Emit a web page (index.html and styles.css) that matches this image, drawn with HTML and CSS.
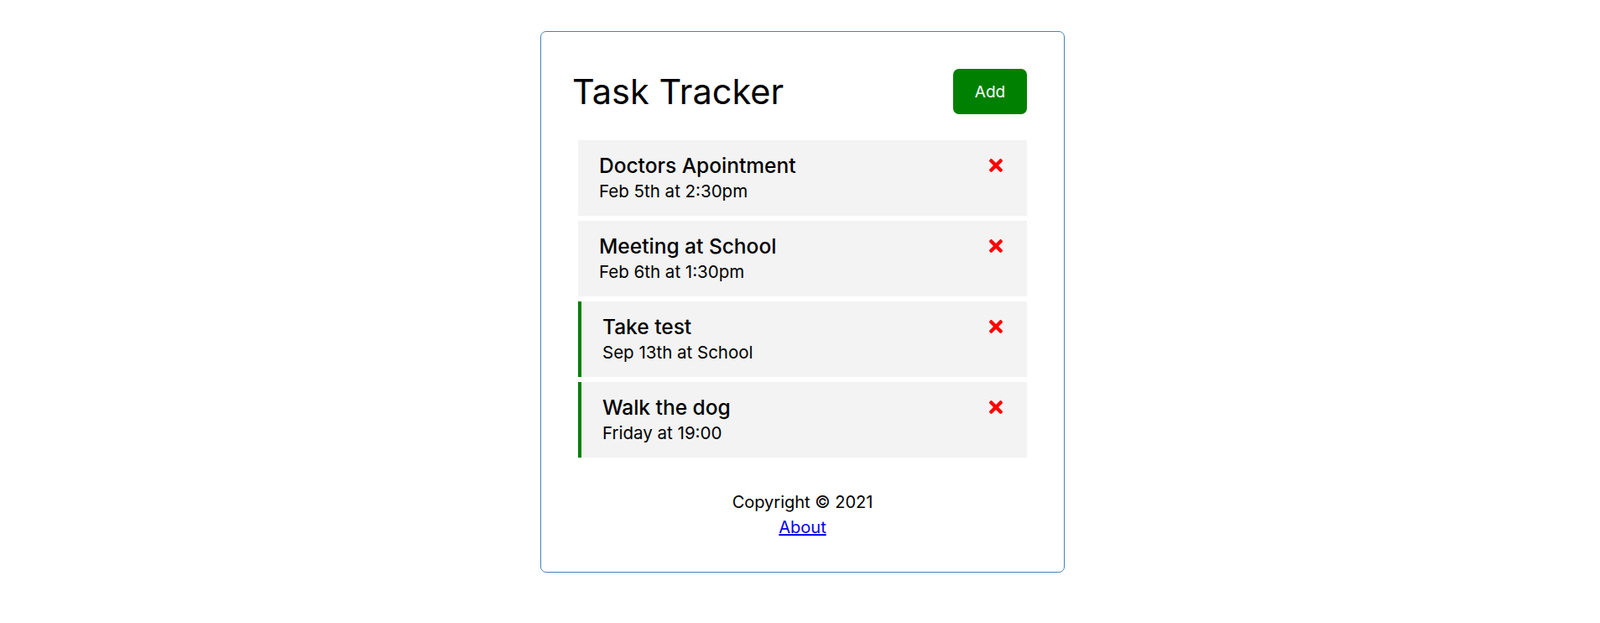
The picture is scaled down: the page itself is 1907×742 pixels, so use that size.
FILE: index.html
```html
<!DOCTYPE html>
<html lang="en">
<head>
<meta charset="utf-8">
<title>Task Tracker</title>
<link rel="stylesheet" href="styles.css">
</head>
<body>
<div class="container">
  <header class="header">
    <h1>Task Tracker</h1>
    <button class="btn">Add</button>
  </header>
  <div class="tasks">
    <div class="task">
      <h3>Doctors Apointment <svg class="del" viewBox="0 80 352 352"><path d="M242.72 256l100.07-100.07c12.28-12.28 12.28-32.19 0-44.48l-22.24-22.24c-12.28-12.28-32.19-12.28-44.48 0L176 189.28 75.93 89.21c-12.28-12.28-32.19-12.28-44.48 0L9.21 111.45c-12.28 12.28-12.28 32.19 0 44.48L109.28 256 9.21 356.07c-12.28 12.28-12.28 32.19 0 44.48l22.24 22.24c12.28 12.28 32.2 12.28 44.48 0L176 322.72l100.07 100.07c12.28 12.28 32.2 12.28 44.48 0l22.24-22.24c12.28-12.28 12.28-32.19 0-44.48L242.72 256z"/></svg></h3>
      <p>Feb 5th at 2:30pm</p>
    </div>
    <div class="task">
      <h3>Meeting at School <svg class="del" viewBox="0 80 352 352"><path d="M242.72 256l100.07-100.07c12.28-12.28 12.28-32.19 0-44.48l-22.24-22.24c-12.28-12.28-32.19-12.28-44.48 0L176 189.28 75.93 89.21c-12.28-12.28-32.19-12.28-44.48 0L9.21 111.45c-12.28 12.28-12.28 32.19 0 44.48L109.28 256 9.21 356.07c-12.28 12.28-12.28 32.19 0 44.48l22.24 22.24c12.28 12.28 32.2 12.28 44.48 0L176 322.72l100.07 100.07c12.28 12.28 32.2 12.28 44.48 0l22.24-22.24c12.28-12.28 12.28-32.19 0-44.48L242.72 256z"/></svg></h3>
      <p>Feb 6th at 1:30pm</p>
    </div>
    <div class="task reminder">
      <h3>Take test <svg class="del" viewBox="0 80 352 352"><path d="M242.72 256l100.07-100.07c12.28-12.28 12.28-32.19 0-44.48l-22.24-22.24c-12.28-12.28-32.19-12.28-44.48 0L176 189.28 75.93 89.21c-12.28-12.28-32.19-12.28-44.48 0L9.21 111.45c-12.28 12.28-12.28 32.19 0 44.48L109.28 256 9.21 356.07c-12.28 12.28-12.28 32.19 0 44.48l22.24 22.24c12.28 12.28 32.2 12.28 44.48 0L176 322.72l100.07 100.07c12.28 12.28 32.2 12.28 44.48 0l22.24-22.24c12.28-12.28 12.28-32.19 0-44.48L242.72 256z"/></svg></h3>
      <p>Sep 13th at School</p>
    </div>
    <div class="task reminder">
      <h3>Walk the dog <svg class="del" viewBox="0 80 352 352"><path d="M242.72 256l100.07-100.07c12.28-12.28 12.28-32.19 0-44.48l-22.24-22.24c-12.28-12.28-32.19-12.28-44.48 0L176 189.28 75.93 89.21c-12.28-12.28-32.19-12.28-44.48 0L9.21 111.45c-12.28 12.28-12.28 32.19 0 44.48L109.28 256 9.21 356.07c-12.28 12.28-12.28 32.19 0 44.48l22.24 22.24c12.28 12.28 32.2 12.28 44.48 0L176 322.72l100.07 100.07c12.28 12.28 32.2 12.28 44.48 0l22.24-22.24c12.28-12.28 12.28-32.19 0-44.48L242.72 256z"/></svg></h3>
      <p>Friday at 19:00</p>
    </div>
  </div>
  <footer class="footer">
    <p>Copyright © 2021</p>
    <a href="#">About</a>
  </footer>
</div>
</body>
</html>
```

FILE: styles.css
```css
* {
  box-sizing: border-box;
  margin: 0;
  padding: 0;
}

body {
  font-family: Inter, "Liberation Sans", sans-serif;
  color: #000;
  background: #fff;
  padding-left: 6px;
}

.container {
  width: 625px;
  height: 645px;
  margin: 37px auto 0;
  border: 1px solid steelblue;
  border-radius: 7px;
  padding: 40px 44px 0 39px;
}

.header {
  display: flex;
  justify-content: space-between;
  align-items: center;
  height: 62px;
}

.header h1 {
  margin-left: -2px;
  font-size: 41.5px;
  font-weight: 400;
  line-height: 52px;
}

.btn {
  width: 88px;
  height: 54px;
  background: #008000;
  color: #fff;
  border: none;
  border-radius: 7px;
  font-family: inherit;
  font-size: 19px;
}

.tasks {
  margin-top: 27px;
  display: flex;
  flex-direction: column;
  gap: 6px;
}

.task {
  height: 90px;
  margin-left: 5px;
  padding: 14px 29px 0 25px;
  background: #f3f3f3;
}

.task.reminder {
  border-left: 4px solid #008000;
}

.task h3 {
  display: flex;
  justify-content: space-between;
  align-items: center;
  font-size: 24.5px;
  font-weight: 500;
  line-height: 32px;
}

.del {
  width: 16px;
  height: 16px;
  fill: #ff0000;
}

.task p {
  font-size: 20.5px;
  line-height: 30px;
}

.footer {
  margin-top: 38px;
  margin-left: 5px;
  text-align: center;
  font-size: 20px;
  line-height: 30px;
}

.footer a {
  color: #0000ee;
}
```
